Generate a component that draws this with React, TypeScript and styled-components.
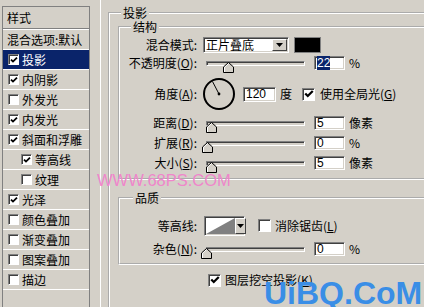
import React from "react";
import styled, { createGlobalStyle } from "styled-components";

const palette = {
  face: "#d4d0c8",
  shadow: "#808080",
  dark: "#404040",
  light: "#ffffff",
  navy: "#0a246a",
};

const GlobalStyle = createGlobalStyle`
  html, body {
    margin: 0;
    padding: 0;
    background: ${palette.face};
    overflow: hidden;
  }
  body {
    font-family: "Noto Sans CJK SC", "Noto Sans", sans-serif;
    font-size: 12px;
    color: #000;
  }
`;

const Dialog = styled.div`
  position: relative;
  display: flex;
  width: 424px;
  height: 307px;
  overflow: hidden;
  background: ${palette.face};
`;

// ---- left style list ----
const Sidebar = styled.div`
  flex: none;
  width: 86px;
  margin: 6px 0 0 2px;
  border: 1px solid ${palette.shadow};
  border-bottom: none;
`;

const SideHeader = styled.div`
  height: 21px;
  line-height: 21px;
  padding-left: 4px;
  border-bottom: 1px solid ${palette.shadow};
`;

const SideList = styled.div`
  border-top: 1px solid ${palette.light};
`;

const SideRow = styled.div<{ $selected?: boolean; $indent?: number }>`
  display: flex;
  align-items: center;
  gap: 3px;
  height: 19px;
  padding-left: ${(p) => p.$indent ?? 5}px;
  border-bottom: 1px solid ${palette.light};
  background: ${(p) => (p.$selected ? palette.navy : "transparent")};
  color: ${(p) => (p.$selected ? "#fff" : "#000")};
  white-space: nowrap;
  line-height: 14px;
`;

const Box = styled.span<{ $size: number }>`
  flex: none;
  display: inline-flex;
  align-items: center;
  justify-content: center;
  width: ${(p) => p.$size}px;
  height: ${(p) => p.$size}px;
  box-sizing: border-box;
  background: #fff;
  border: 1px solid;
  border-color: ${palette.shadow} ${palette.light} ${palette.light} ${palette.shadow};
  box-shadow: inset 1px 1px ${palette.dark};
`;

const Check: React.FC<{ on?: boolean; size?: number }> = ({ on, size = 11 }) => (
  <Box $size={size}>
    {on ? (
      <svg width={size - 3} height={size - 3} viewBox="0 0 8 8">
        <polyline points="1,3.6 3,5.6 7,1.6" fill="none" stroke="#000" strokeWidth="1.8" />
      </svg>
    ) : null}
  </Box>
);

// ---- right page ----
const Page = styled.div`
  flex: none;
  width: 323px;
  margin-left: 10px;
  border-left: 1px solid ${palette.light};
  padding-left: 7px;
`;

const Group = styled.fieldset<{ $mt?: number; $ml?: number; $w: number; $pb?: number }>`
  margin: ${(p) => p.$mt ?? 0}px 0 0 ${(p) => p.$ml ?? 0}px;
  padding: 0 0 ${(p) => p.$pb ?? 0}px 0;
  width: ${(p) => p.$w}px;
  min-width: 0;
  border: 2px groove #fff;
`;

const Legend = styled.legend<{ $indent: number }>`
  margin-left: ${(p) => p.$indent}px;
  padding: 0 2px;
  line-height: 14px;
  font-size: 12px;
`;

const Rows = styled.div<{ $pt: number; $pb: number }>`
  display: flex;
  flex-direction: column;
  padding: ${(p) => p.$pt}px 0 ${(p) => p.$pb}px 0;
`;

const Row = styled.div<{ $h: number; $mt?: number; $pl?: number }>`
  display: flex;
  align-items: center;
  height: ${(p) => p.$h}px;
  margin-top: ${(p) => p.$mt ?? 0}px;
  padding-left: ${(p) => p.$pl ?? 0}px;
  white-space: nowrap;
  line-height: 14px;
`;

const Label = styled.span`
  flex: none;
  width: 77px;
  text-align: right;
`;

const Text = styled.span<{ $ml?: number }>`
  flex: none;
  margin-left: ${(p) => p.$ml ?? 0}px;
`;

const Sunken = styled.div<{ $w: number; $h: number; $ml: number }>`
  flex: none;
  position: relative;
  display: flex;
  align-items: center;
  box-sizing: border-box;
  width: ${(p) => p.$w}px;
  height: ${(p) => p.$h}px;
  margin-left: ${(p) => p.$ml}px;
  background: #fff;
  border: 1px solid;
  border-color: ${palette.shadow} ${palette.light} ${palette.light} ${palette.shadow};
  box-shadow: inset 1px 1px ${palette.dark}, inset -1px -1px ${palette.face};
`;

const FieldText = styled.span`
  padding-left: 2px;
  flex: 1;
  font-family: "Liberation Sans", Arial, sans-serif;
  font-size: 12px;
  line-height: 11px;
`;

const CjkFieldText = styled.span`
  padding-left: 2px;
  flex: 1;
  font-size: 12px;
  line-height: 12px;
`;

const Highlight = styled.span`
  background: ${palette.navy};
  color: #fff;
`;

const DropButton = styled.span<{ $w: number }>`
  flex: none;
  align-self: stretch;
  display: flex;
  align-items: center;
  justify-content: center;
  width: ${(p) => p.$w}px;
  margin: 1px 1px 1px 0;
  box-sizing: border-box;
  background: ${palette.face};
  border: 1px solid;
  border-color: ${palette.light} ${palette.dark} ${palette.dark} ${palette.light};
`;

const Arrow = () => (
  <svg width="7" height="4" viewBox="0 0 7 4">
    <polygon points="0,0 7,0 3.5,4" fill="#000" />
  </svg>
);

const Swatch = styled.div`
  flex: none;
  width: 27px;
  height: 16px;
  margin-left: 5px;
  box-sizing: border-box;
  background: #000;
  border: 1px solid ${palette.shadow};
`;

const Track = styled.div`
  flex: none;
  position: relative;
  width: 99px;
  height: 5px;
  margin-left: 9px;
  box-sizing: border-box;
  border: 1px solid;
  border-color: ${palette.shadow} ${palette.light} ${palette.light} ${palette.shadow};
  box-shadow: inset 1px 1px ${palette.dark};
  background: ${palette.face};
`;

const ThumbIcon = styled.svg`
  position: absolute;
  top: 0;
`;

const Slider: React.FC<{ value: number }> = ({ value }) => (
  <Track>
    <ThumbIcon width="11" height="11" viewBox="0 0 11 11" style={{ left: value - 6 }}>
      <polygon points="0.5,10.5 0.5,5 5.5,0.5 10.5,5 10.5,10.5" fill={palette.face} />
      <polyline points="1.5,10 1.5,5.3 5.5,1.5" fill="none" stroke="#fff" />
      <polyline points="0.5,10.5 0.5,5 5.5,0.5 10.5,5 10.5,10.5 0.5,10.5" fill="none" stroke="#000" />
    </ThumbIcon>
  </Track>
);

const Dial = () => (
  <svg width="34" height="34" viewBox="0 0 34 34" style={{ flex: "none", marginLeft: 5 }}>
    <circle cx="17" cy="17" r="15" fill="none" stroke="#000" strokeWidth="2" />
    <line x1="17" y1="17" x2="10.5" y2="4.5" stroke="#000" strokeWidth="1" />
    <circle cx="17" cy="17" r="1.4" fill="#000" />
  </svg>
);

const ContourPreview = () => (
  <svg width="29" height="16" viewBox="0 0 29 16" style={{ flex: "none", marginLeft: 1 }}>
    <polygon points="0,0 29,0 0,16" fill="#fff" />
    <polygon points="29,0 29,16 0,16" fill="#808080" />
  </svg>
);

const Watermark = styled.div`
  position: absolute;
  left: 97px;
  top: 170px;
  font-family: "Liberation Sans", Arial, sans-serif;
  font-size: 16.5px;
  line-height: 20px;
  color: #ef86cb;
  letter-spacing: 0;
  pointer-events: none;
`;

const SiteMark = styled.div`
  position: absolute;
  left: 264px;
  top: 277px;
  font-family: "Liberation Sans", Arial, sans-serif;
  font-weight: bold;
  font-size: 32px;
  line-height: 32px;
  color: #3a8ee6;
  pointer-events: none;
`;

const styleItems: { name: string; on?: boolean; indent?: number; selected?: boolean }[] = [
  { name: "投影", on: true, selected: true },
  { name: "内阴影", on: true },
  { name: "外发光" },
  { name: "内发光", on: true },
  { name: "斜面和浮雕", on: true },
  { name: "等高线", on: true, indent: 18 },
  { name: "纹理", indent: 18 },
  { name: "光泽", on: true },
  { name: "颜色叠加" },
  { name: "渐变叠加" },
  { name: "图案叠加" },
  { name: "描边" },
];

const App: React.FC = () => {
  return (
    <Dialog>
      <GlobalStyle />
      <Sidebar>
        <SideHeader>样式</SideHeader>
        <SideList>
          <SideRow $indent={4}>混合选项:默认</SideRow>
          {styleItems.map((item) => (
            <SideRow key={item.name} $selected={item.selected} $indent={item.indent}>
              <Check on={item.on} />
              <span>{item.name}</span>
            </SideRow>
          ))}
        </SideList>
      </Sidebar>

      <Page>
        <Group $mt={6} $w={340} $pb={30}>
          <Legend $indent={11}>投影</Legend>

          <Group $ml={8} $w={320}>
            <Legend $indent={11}>结构</Legend>
            <Rows $pt={3} $pb={8}>
              <Row $h={16}>
                <Label>混合模式:</Label>
                <Sunken $w={86} $h={16} $ml={6}>
                  <CjkFieldText>正片叠底</CjkFieldText>
                  <DropButton $w={15}>
                    <Arrow />
                  </DropButton>
                </Sunken>
                <Swatch />
              </Row>
              <Row $h={14} $mt={3}>
                <Label>
                  不透明度(<u>O</u>):
                </Label>
                <Slider value={22} />
                <Sunken $w={31} $h={14} $ml={9}>
                  <FieldText>
                    <Highlight>22</Highlight>
                  </FieldText>
                </Sunken>
                <Text $ml={4}>%</Text>
              </Row>
              <Row $h={32} $mt={8}>
                <Label>
                  角度(<u>A</u>):
                </Label>
                <Dial />
                <Sunken $w={33} $h={15} $ml={7}>
                  <FieldText>120</FieldText>
                </Sunken>
                <Text $ml={4}>度</Text>
                <Text $ml={10}>
                  <Check on size={13} />
                </Text>
                <Text $ml={5}>
                  使用全局光(<u>G</u>)
                </Text>
              </Row>
              <Row $h={14} $mt={6}>
                <Label>
                  距离(<u>D</u>):
                </Label>
                <Slider value={5} />
                <Sunken $w={31} $h={14} $ml={9}>
                  <FieldText>5</FieldText>
                </Sunken>
                <Text $ml={4}>像素</Text>
              </Row>
              <Row $h={14} $mt={6}>
                <Label>
                  扩展(<u>R</u>):
                </Label>
                <Slider value={1} />
                <Sunken $w={31} $h={14} $ml={9}>
                  <FieldText>0</FieldText>
                </Sunken>
                <Text $ml={4}>%</Text>
              </Row>
              <Row $h={14} $mt={6}>
                <Label>
                  大小(<u>S</u>):
                </Label>
                <Slider value={5} />
                <Sunken $w={31} $h={14} $ml={9}>
                  <FieldText>5</FieldText>
                </Sunken>
                <Text $ml={4}>像素</Text>
              </Row>
            </Rows>
          </Group>

          <Group $mt={11} $ml={8} $w={320}>
            <Legend $indent={13}>品质</Legend>
            <Rows $pt={11} $pb={7}>
              <Row $h={20}>
                <Label>等高线:</Label>
                <Sunken $w={41} $h={20} $ml={7}>
                  <ContourPreview />
                  <DropButton $w={11}>
                    <Arrow />
                  </DropButton>
                </Sunken>
                <Text $ml={13}>
                  <Check size={13} />
                </Text>
                <Text $ml={4}>
                  消除锯齿(<u>L</u>)
                </Text>
              </Row>
              <Row $h={14} $mt={6}>
                <Label>
                  杂色(<u>N</u>):
                </Label>
                <Slider value={0} />
                <Sunken $w={31} $h={14} $ml={9}>
                  <FieldText>0</FieldText>
                </Sunken>
                <Text $ml={4}>%</Text>
              </Row>
            </Rows>
          </Group>

          <Row $h={14} $mt={8} $pl={98}>
            <Check on size={13} />
            <Text $ml={4}>
              图层挖空投影(<u>K</u>)
            </Text>
          </Row>
        </Group>
      </Page>

      <Watermark>WWW.68PS.COM</Watermark>
      <SiteMark>UiBQ.CoM</SiteMark>
    </Dialog>
  );
};

export default App;
